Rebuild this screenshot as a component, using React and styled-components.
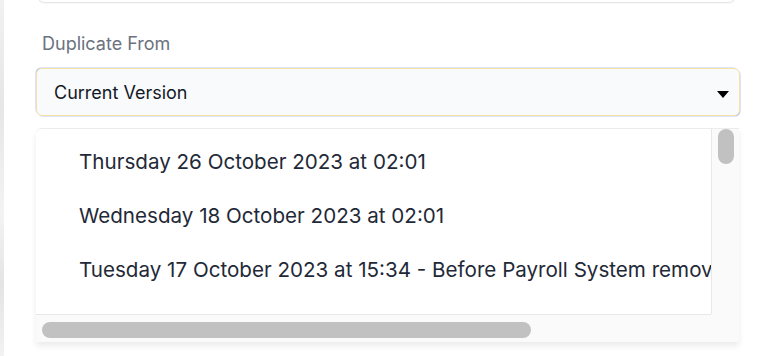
import styled, { createGlobalStyle } from 'styled-components'

const GlobalStyle = createGlobalStyle`
  html, body {
    margin: 0;
    background: #ffffff;
    font-family: Inter, 'Noto Sans', sans-serif;
  }
`

const Page = styled.div`
  display: flex;
  height: 356px;
  overflow: hidden;
`

const Backdrop = styled.div`
  width: 4px;
  flex: none;
  background: linear-gradient(180deg, #f1f1f2 0%, #e6e6e8 30%, #f3f3f4 60%, #e4e4e6 80%, #f2f2f3 100%);
`

const Panel = styled.div`
  flex: 1;
  min-width: 0;
  padding: 0 20px 0 32px;
  display: flex;
  flex-direction: column;
`

const PrevField = styled.div`
  flex: none;
  height: 40px;
  margin: -38px 5px 0 2px;
  border: 1px solid #e5e7eb;
  border-top: none;
  border-radius: 0 0 6px 6px;
  box-shadow: 0 1px 1px rgba(0, 0, 0, 0.03);
`

const Label = styled.label`
  margin: 28px 0 0 6px;
  font-size: 18px;
  line-height: 26px;
  color: #6b7280;
`

const Select = styled.div`
  flex: none;
  margin-top: 11px;
  height: 48px;
  box-sizing: border-box;
  border: 1px solid #f4e2a4;
  border-radius: 6px;
  background: #f9fafb;
  display: flex;
  align-items: center;
  justify-content: space-between;
  padding: 0 10px 0 17px;
  font-size: 18px;
  color: #111827;
  box-shadow: -1px -1px 0 -0.5px rgba(59, 100, 230, 0.35), 1px 1px 0 -0.5px rgba(59, 100, 230, 0.35);
`

const Caret = styled.span`
  width: 0;
  height: 0;
  margin-top: 4px;
  border-left: 6px solid transparent;
  border-right: 6px solid transparent;
  border-top: 7px solid #000000;
`

const Menu = styled.div`
  flex: none;
  margin-top: 12px;
  margin-right: 1px;
  height: 214px;
  box-sizing: border-box;
  border-top: 1px solid #ececec;
  border-radius: 6px 0 0 0;
  background: #ffffff;
  box-shadow: 0 4px 6px rgba(0, 0, 0, 0.08);
  overflow: hidden;
  display: grid;
  grid-template-columns: 1fr 28px;
  grid-template-rows: 1fr 28px;
`

const Viewport = styled.div`
  overflow: hidden;
  min-width: 0;
`

const Track = styled.div`
  background: #fafafa;
  display: flex;
  box-sizing: border-box;
  border-left: ${(p) => (p.$vertical ? '1px solid #e8e8e8' : 'none')};
  border-top: ${(p) => (p.$vertical ? 'none' : '1px solid #e8e8e8')};
  padding: ${(p) => (p.$vertical ? '0 0 0 6px' : '7px 0 0 6px')};
`

const Thumb = styled.div`
  background: #c1c1c1;
  border-radius: 8px;
  width: ${(p) => p.$w}px;
  height: ${(p) => p.$h}px;
`

const Corner = styled.div`
  background: #fafafa;
`

const Options = styled.ul`
  list-style: none;
  margin: 0;
  padding: 5px 0 0;
  width: 930px;
`

const Option = styled.li`
  height: 54px;
  display: flex;
  align-items: center;
  padding-left: 43px;
  font-size: 20.6px;
  color: #1f2937;
  white-space: nowrap;
`

const versions = [
  'Thursday 26 October 2023 at 02:01',
  'Wednesday 18 October 2023 at 02:01',
  'Tuesday 17 October 2023 at 15:34 - Before Payroll System removal',
  'Tuesday 17 October 2023 at 02:01',
  'Monday 16 October 2023 at 02:01',
  'Friday 13 October 2023 at 02:01',
]

const App = () => {
  return (
    <>
      <GlobalStyle />
      <Page>
        <Backdrop />
        <Panel>
          <PrevField />
          <Label>Duplicate From</Label>
          <Select>
            <span>Current Version</span>
            <Caret />
          </Select>
          <Menu>
            <Viewport>
              <Options>
                {versions.map((v) => (
                  <Option key={v}>{v}</Option>
                ))}
              </Options>
            </Viewport>
            <Track $vertical>
              <Thumb $w={16} $h={35} />
            </Track>
            <Track>
              <Thumb $w={489} $h={16} />
            </Track>
            <Corner />
          </Menu>
        </Panel>
      </Page>
    </>
  )
}

export default App
